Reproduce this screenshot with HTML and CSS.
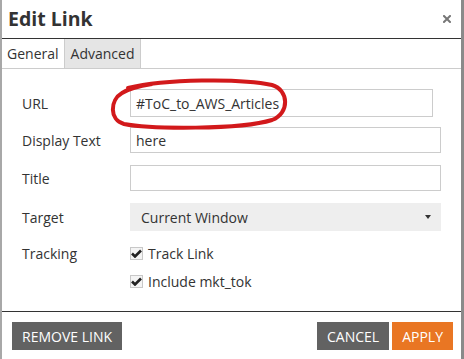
FILE: index.html
```html
<!DOCTYPE html>
<html>
<head>
<meta charset="utf-8">
<link rel="stylesheet" href="styles.css">
</head>
<body>
<div class="dialog">
  <div class="header">
    <span class="title">Edit Link</span>
    <span class="close"><svg width="8" height="8" viewBox="0 0 8 8"><path d="M1 1L7 7M7 1L1 7" stroke="#777" stroke-width="2" stroke-linecap="square"/></svg></span>
  </div>
  <div class="tabs">
    <div class="tab active">General</div>
    <div class="tab">Advanced</div>
  </div>
  <div class="form">
    <div class="row r-url"><label class="lbl">URL</label><div class="input url">#ToC_to_AWS_Articles</div></div>
    <div class="row r-disp"><label class="lbl">Display Text</label><div class="input short">here</div></div>
    <div class="row r-title"><label class="lbl">Title</label><div class="input short"></div></div>
    <div class="row r-target"><label class="lbl">Target</label><div class="select">Current Window<span class="caret"></span></div></div>
    <div class="row r-track"><label class="lbl">Tracking</label><span class="check"><svg width="11" height="9" viewBox="0 0 11 9"><path d="M1 4.5L4 7.5L10 1.5" stroke="#222" stroke-width="2.6" fill="none"/></svg></span><span class="ctext">Track Link</span></div>
    <div class="row r-mkt"><span class="lbl"></span><span class="check"><svg width="11" height="9" viewBox="0 0 11 9"><path d="M1 4.5L4 7.5L10 1.5" stroke="#222" stroke-width="2.6" fill="none"/></svg></span><span class="ctext">Include mkt_tok</span></div>
  </div>
  <div class="footer">
    <button class="btn gray">REMOVE LINK</button>
    <span class="spacer"></span>
    <button class="btn gray">CANCEL</button>
    <button class="btn orange">APPLY</button>
  </div>
  <svg class="annot" width="464" height="359" viewBox="0 0 464 359">
    <path d="M128,88 C165,79 240,78 272,85 C289,90 290,113 272,120 C240,130 150,129 124,124 C109,120 110,100 122,93 C130,88 140,86 152,84" stroke="#d2191b" stroke-width="4" fill="none" stroke-linecap="round"/>
  </svg>
</div>
</body>
</html>
```
FILE: styles.css
```css
* { box-sizing: border-box; }
html, body { margin: 0; padding: 0; background: #fff; }
body { font-family: "Open Sans", "Liberation Sans", sans-serif; color: #333; font-size: 14px; }
.dialog {
  position: relative;
  width: 464px; height: 359px;
  border-left: 2px solid #a8a8a8;
  border-right: 3px solid #8a8a8a;
  display: flex; flex-direction: column;
  background: #fff;
}
.header {
  height: 39px;
  border-bottom: 1px solid #333;
  display: flex; align-items: center; justify-content: space-between;
  padding: 0 10px 0 6px;
}
.title { font-weight: 700; font-size: 19.5px; color: #333; margin-top: -1px; }
.close { display: flex; margin-top: 0; }
.tabs {
  height: 30px;
  border-bottom: 1px solid #ccc;
  display: flex;
}
.tab {
  display: flex; align-items: center;
  padding: 0 5px;
  border-right: 1px solid #ccc;
  color: #333;
}
.tab.active { background: #fff; }
.tab:not(.active) { background: #e5e5e5; padding: 0 6px; }
.form { flex: 1; padding: 20px 0 0 20px; }
.row { display: flex; align-items: center; }
.lbl { width: 108px; color: #333; }
.input {
  height: 26px; border: 1px solid #ccc;
  padding: 0 5px; display: flex; align-items: center; color: #333;
  width: 311px;
}
.input.url { width: 303px; height: 28px; }
.r-disp { margin-top: 10px; }
.r-title { margin-top: 12px; }
.r-target { margin-top: 12px; }
.select {
  width: 311px; height: 28px; background: #eee;
  display: flex; align-items: center; justify-content: space-between;
  padding: 0 10px 0 11px; color: #333;
}
.caret {
  width: 0; height: 0;
  border-left: 3.5px solid transparent; border-right: 3.5px solid transparent;
  border-top: 4px solid #333;
}
.r-track { margin-top: 12px; height: 20px; }
.r-mkt { margin-top: 8px; height: 20px; }
.check {
  width: 13px; height: 13px; border: 1px solid #c8c8c8; background: #f4f4f4;
  display: flex; align-items: center; justify-content: center;
  margin-right: 5px;
}
.ctext { color: #333; }
.footer {
  height: 48px;
  border-top: 1px solid #333;
  display: flex; align-items: flex-start;
  padding: 10px 8px 0 10px;
}
.spacer { flex: 1; }
.btn {
  font-family: "Open Sans", "Liberation Sans", sans-serif;
  font-size: 14px; color: #fff; border: none; height: 28px;
  padding: 0 10px; margin: 0;
}
.btn.gray { background: #626262; }
.btn.orange { background: #e97623; margin-left: 3px; }
.annot { position: absolute; left: -2px; top: 0; pointer-events: none; }
```
